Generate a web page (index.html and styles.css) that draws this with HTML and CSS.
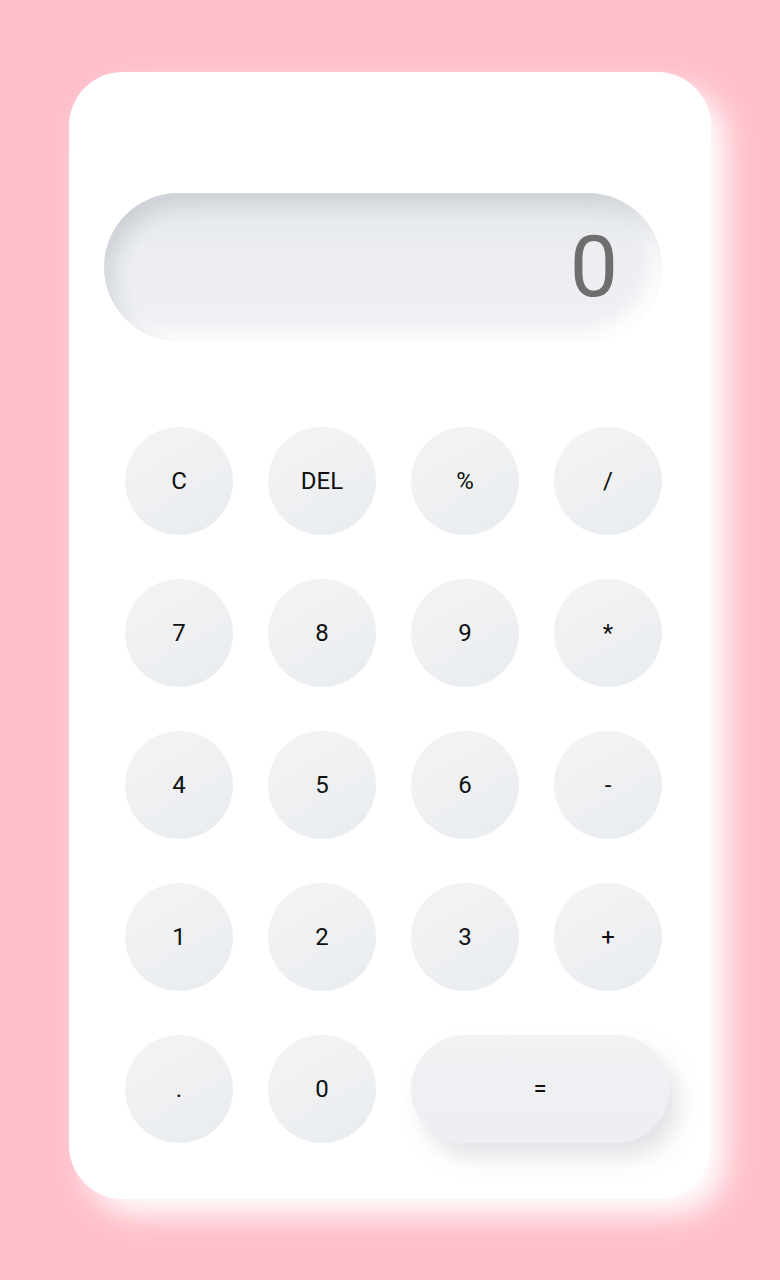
FILE: index.html
```html
<!DOCTYPE html>
<html lang="en">
<head>
<meta charset="utf-8">
<title>Calculator</title>
<link rel="stylesheet" href="styles.css">
</head>
<body>
<div class="calculator">
  <div class="display"><span class="value">0</span></div>
  <div class="keys">
    <button class="key">C</button>
    <button class="key">DEL</button>
    <button class="key">%</button>
    <button class="key">/</button>
    <button class="key">7</button>
    <button class="key">8</button>
    <button class="key">9</button>
    <button class="key">*</button>
    <button class="key">4</button>
    <button class="key">5</button>
    <button class="key">6</button>
    <button class="key">-</button>
    <button class="key">1</button>
    <button class="key">2</button>
    <button class="key">3</button>
    <button class="key">+</button>
    <button class="key">.</button>
    <button class="key">0</button>
    <button class="key equals">=</button>
  </div>
</div>
</body>
</html>
```
FILE: styles.css
```css
* { box-sizing: border-box; }
html, body { margin: 0; padding: 0; }
body {
  background: #ffc0cb;
  min-height: 1280px;
  padding: 72px 0 0 69px;
  font-family: Roboto, "Liberation Sans", sans-serif;
}
.calculator {
  width: 642px;
  height: 1127px;
  background: #ffffff;
  border-radius: 54px;
  padding: 121px 49px 0 35px;
  box-shadow: 16px 16px 28px rgba(255, 255, 255, 0.95);
}
.display {
  height: 148px;
  border-radius: 74px;
  background: linear-gradient(180deg, #e4e7ea 0%, #eceef1 40%, #eef0f3 100%);
  box-shadow: inset 10px 12px 18px rgba(170, 176, 184, 0.4), inset -10px -10px 18px rgba(255, 255, 255, 0.95);
  display: flex;
  align-items: center;
  justify-content: flex-end;
  padding-right: 44px;
}
.value {
  font-size: 86px;
  font-weight: 400;
  color: #6e6e6e;
  line-height: 1;
}
.keys {
  margin-top: 86px;
  margin-left: 21px;
  display: grid;
  grid-template-columns: repeat(4, 108px);
  grid-auto-rows: 108px;
  column-gap: 35px;
  row-gap: 44px;
}
.key {
  border: none;
  border-radius: 50%;
  background: linear-gradient(150deg, #f3f4f6 0%, #eef0f2 50%, #e9ecef 100%);
  font-family: Roboto, "Liberation Sans", sans-serif;
  font-size: 24px;
  font-weight: 400;
  color: #111;
  padding: 0;
  display: flex;
  align-items: center;
  justify-content: center;
}
.key.equals {
  grid-column: span 2;
  width: 258px;
  border-radius: 54px;
  background: linear-gradient(180deg, #f0f2f4 0%, #eceef1 100%);
  box-shadow: 10px 14px 22px rgba(150, 155, 165, 0.28), -6px -6px 14px rgba(255, 255, 255, 0.9);
}
```
